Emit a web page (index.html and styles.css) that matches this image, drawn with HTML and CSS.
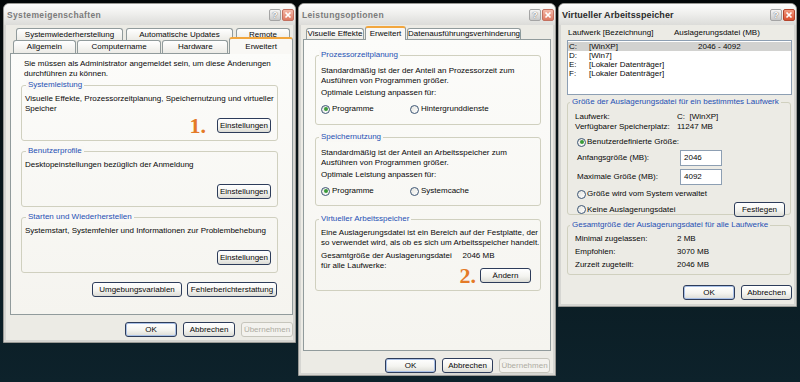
FILE: index.html
```html
<!DOCTYPE html>
<html lang="de">
<head>
	<meta charset="UTF-8" />
	<meta name="viewport" content="width=device-width, initial-scale=1.0" />
	<title>Systemeigenschaften - Virtueller Arbeitsspeicher</title>
	<link rel="stylesheet" href="styles.css">
</head>
<body>

	<!-- Systemeigenschaften -->
	<div class="window sys">
		<div class="titlebar">
			<span class="title">Systemeigenschaften</span>
			<span class="caption">
				<span class="cap-btn help">?</span>
				<span class="cap-btn close"><svg viewBox="0 0 10 10"><path d="M2.5 2.5 L7.5 7.5 M7.5 2.5 L2.5 7.5" /></svg></span>
			</span>
		</div>
		<div class="client">
			<div class="tab-row back">
				<span class="tab t-restore">Systemwiederherstellung</span>
				<span class="tab t-updates">Automatische Updates</span>
				<span class="tab t-remote">Remote</span>
			</div>
			<div class="tab-row front">
				<span class="tab t-general">Allgemein</span>
				<span class="tab t-name">Computername</span>
				<span class="tab t-hw">Hardware</span>
				<span class="tab active t-adv">Erweitert</span>
			</div>
			<div class="panel">
				<p class="intro">Sie müssen als Administrator angemeldet sein, um diese Änderungen<br>durchführen zu können.</p>

				<div class="group">
					<span class="legend">Systemleistung</span>
					<p>Visuelle Effekte, Prozessorzeitplanung, Speichernutzung und virtueller<br>Speicher</p>
					<div class="btn-row">
						<span class="step">1.</span>
						<button class="btn wide">Einstellungen</button>
					</div>
				</div>

				<div class="group">
					<span class="legend">Benutzerprofile</span>
					<p>Desktopeinstellungen bezüglich der Anmeldung</p>
					<div class="btn-row">
						<button class="btn wide">Einstellungen</button>
					</div>
				</div>

				<div class="group">
					<span class="legend">Starten und Wiederherstellen</span>
					<p>Systemstart, Systemfehler und Informationen zur Problembehebung</p>
					<div class="btn-row">
						<button class="btn wide">Einstellungen</button>
					</div>
				</div>

				<div class="actions">
					<button class="btn xwide">Umgebungsvariablen</button>
					<button class="btn xwide">Fehlerberichterstattung</button>
				</div>
			</div>
			<div class="footer">
				<button class="btn default">OK</button>
				<button class="btn">Abbrechen</button>
				<button class="btn disabled">Übernehmen</button>
			</div>
		</div>
	</div>

	<!-- Leistungsoptionen -->
	<div class="window perf">
		<div class="titlebar">
			<span class="title">Leistungsoptionen</span>
			<span class="caption">
				<span class="cap-btn help">?</span>
				<span class="cap-btn close"><svg viewBox="0 0 10 10"><path d="M2.5 2.5 L7.5 7.5 M7.5 2.5 L2.5 7.5" /></svg></span>
			</span>
		</div>
		<div class="client">
			<div class="tab-row">
				<span class="tab t-fx">Visuelle Effekte</span>
				<span class="tab active t-adv">Erweitert</span>
				<span class="tab t-dep">Datenausführungsverhinderung</span>
			</div>
			<div class="panel">
				<div class="group g-cpu">
					<span class="legend">Prozessorzeitplanung</span>
					<p>Standardmäßig ist der der Anteil an Prozessorzeit zum<br>Ausführen von Programmen größer.</p>
					<p class="hint">Optimale Leistung anpassen für:</p>
					<div class="options">
						<span class="option"><span class="radio on"></span>Programme</span>
						<span class="option"><span class="radio"></span>Hintergrunddienste</span>
					</div>
				</div>

				<div class="group g-mem">
					<span class="legend">Speichernutzung</span>
					<p>Standardmäßig ist der Anteil an Arbeitsspeicher zum<br>Ausführen von Programmen größer.</p>
					<p class="hint">Optimale Leistung anpassen für:</p>
					<div class="options">
						<span class="option"><span class="radio on"></span>Programme</span>
						<span class="option"><span class="radio"></span>Systemcache</span>
					</div>
				</div>

				<div class="group g-virt">
					<span class="legend">Virtueller Arbeitsspeicher</span>
					<p>Eine Auslagerungsdatei ist ein Bereich auf der Festplatte, der<br>so verwendet wird, als ob es sich um Arbeitsspeicher handelt.</p>
					<div class="pagefile">
						<span class="pf-label">Gesamtgröße der Auslagerungsdatei<br>für alle Laufwerke:</span>
						<div class="pf-value">
							<span>2046 MB</span>
							<div class="pf-change">
								<span class="step">2.</span>
								<button class="btn">Ändern</button>
							</div>
						</div>
					</div>
				</div>
			</div>
			<div class="footer">
				<button class="btn default">OK</button>
				<button class="btn">Abbrechen</button>
				<button class="btn disabled">Übernehmen</button>
			</div>
		</div>
	</div>

	<!-- Virtueller Arbeitsspeicher -->
	<div class="window vm">
		<div class="titlebar">
			<span class="title">Virtueller Arbeitsspeicher</span>
			<span class="caption">
				<span class="cap-btn help">?</span>
				<span class="cap-btn close"><svg viewBox="0 0 10 10"><path d="M2.5 2.5 L7.5 7.5 M7.5 2.5 L2.5 7.5" /></svg></span>
			</span>
		</div>
		<div class="client">
			<div class="lb-head">
				<span class="lb-col">Laufwerk [Bezeichnung]</span>
				<span>Auslagerungsdatei (MB)</span>
			</div>
			<div class="listbox">
				<div class="lb-row sel"><span class="drive">C:</span><span class="label">[WinXP]</span><span>2046 - 4092</span></div>
				<div class="lb-row"><span class="drive">D:</span><span class="label">[Win7]</span></div>
				<div class="lb-row"><span class="drive">E:</span><span class="label">[Lokaler Datenträger]</span></div>
				<div class="lb-row"><span class="drive">F:</span><span class="label">[Lokaler Datenträger]</span></div>
			</div>

			<div class="group g-drive">
				<span class="legend">Größe der Auslagerungsdatei für ein bestimmtes Laufwerk</span>
				<div class="field first"><span class="key">Laufwerk:</span><span>C:&nbsp; [WinXP]</span></div>
				<div class="field"><span class="key">Verfügbarer Speicherplatz:</span><span>11247 MB</span></div>
				<div class="radio-line r-custom"><span class="radio on"></span>Benutzerdefinierte Größe:</div>
				<div class="size-row"><span class="key">Anfangsgröße (MB):</span><span class="input">2046</span></div>
				<div class="size-row"><span class="key">Maximale Größe (MB):</span><span class="input">4092</span></div>
				<div class="radio-line r-system"><span class="radio"></span>Größe wird vom System verwaltet</div>
				<div class="set-row">
					<span class="radio-line"><span class="radio"></span>Keine Auslagerungsdatei</span>
					<button class="btn">Festlegen</button>
				</div>
			</div>

			<div class="group g-total">
				<span class="legend">Gesamtgröße der Auslagerungsdatei für alle Laufwerke</span>
				<div class="total first"><span class="key">Minimal zugelassen:</span><span>2 MB</span></div>
				<div class="total"><span class="key">Empfohlen:</span><span>3070 MB</span></div>
				<div class="total"><span class="key">Zurzeit zugeteilt:</span><span>2046 MB</span></div>
			</div>

			<div class="footer">
				<button class="btn default">OK</button>
				<button class="btn">Abbrechen</button>
			</div>
		</div>
	</div>

</body>
</html>
```

FILE: styles.css
```css
/* Variables */
:root {
	--face: #ecebe5;
	--page: #f9f8f5;
	--frame: #d6d6d2;
	--tab-line: #919b9c;
	--group-line: #d0d0bf;
	--legend: #1f50b4;
	--text: #080808;
	--step: #e47a27;
}
/* End of Variables */

* {
	margin: 0;
	padding: 0;
	box-sizing: border-box;
}

body {
	display: flex;
	align-items: flex-start;
	gap: 2px;
	height: 382px;
	overflow: hidden;
	padding: 3px 0 0 3px;
	background: linear-gradient(#040809, #0a1a20 60%, #0d222b);
	color: var(--text);
	font-family: "Liberation Sans", Arial, sans-serif;
	font-size: 8px;
	line-height: 10px;
	white-space: nowrap;
}

/* Window frame */
.window {
	display: flex;
	flex-direction: column;
	padding: 0 2px 2px;
	background: var(--frame);
	border: 1px solid #9a9a96;
	border-radius: 6px 6px 0 0;
}

.sys { width: 293px; height: 340px; }
.perf { width: 258px; height: 373px; }
.vm { width: 239px; height: 304px; }

.titlebar {
	display: flex;
	align-items: center;
	justify-content: space-between;
	height: 21px;
	margin: 0 -2px;
	padding: 0 1px 0 3px;
	border-radius: 5px 5px 0 0;
	background: linear-gradient(#fdfdfd, #efefed 45%, #dcdcd9);
}

.title {
	font-size: 8.5px;
	font-weight: bold;
	letter-spacing: 0.35px;
	color: #7b7b7b;
}

.vm .title {
	font-size: 9px;
	letter-spacing: 0.1px;
	color: #2b2b2b;
}

.caption {
	display: flex;
	gap: 1px;
}

.cap-btn {
	display: flex;
	align-items: center;
	justify-content: center;
	width: 12px;
	height: 12px;
	border-radius: 2px;
}

.cap-btn.help {
	border: 1px solid #a4a4a4;
	background: linear-gradient(#f6f6f6, #c9c9c9);
	color: #fff;
	font-size: 9px;
	font-weight: bold;
	letter-spacing: 0;
	text-shadow: 0 0 1px #777, 0 0 1px #777;
}

.cap-btn.close {
	border: 1px solid #c3705f;
	background: linear-gradient(#f4b8a8, #de7a63);
}

.vm .cap-btn.close {
	border-color: #b4442c;
	background: linear-gradient(#f29a80, #d9502f);
}

.cap-btn svg {
	width: 10px;
	height: 10px;
	stroke: #fff;
	stroke-width: 1.7;
	fill: none;
}

.client {
	flex: 1;
	display: flex;
	flex-direction: column;
	background: var(--face);
}

/* Tabs */
.tab-row {
	display: flex;
	align-items: flex-end;
}

.tab {
	display: flex;
	align-items: center;
	justify-content: center;
	height: 100%;
	border: 1px solid var(--tab-line);
	border-bottom: 0;
	border-radius: 3px 3px 0 0;
	background: linear-gradient(#ffffff, #ecebe6);
}

.tab.active {
	position: relative;
	z-index: 1;
	margin-bottom: -1px;
	border-top: 2px solid #f2a63d;
	background: var(--page);
}

.sys .tab-row.back {
	height: 12px;
	margin: 3px 0 0 10px;
	gap: 3px;
}

.sys .tab-row.front {
	height: 13px;
	margin-left: 7px;
	gap: 1px;
}

.sys .tab.active {
	height: 17px;
	margin-top: -4px;
}

.t-restore { width: 107px; }
.t-updates { width: 107px; }
.t-remote { width: 54px; }
.t-general { width: 63px; }
.t-name { width: 85px; }
.t-hw { width: 66px; }
.sys .t-adv { width: 64px; }

.perf .tab-row {
	height: 11px;
	margin: 3px 0 0 5px;
	gap: 1px;
}

.perf .tab.active {
	height: 14px;
	margin-top: -3px;
}

.t-fx { width: 58px; }
.perf .t-adv { width: 41px; }
.t-dep { width: 114px; }

.panel {
	border: 1px solid var(--tab-line);
	background: linear-gradient(#fcfcfa, #f5f4ef);
}

.sys .panel {
	width: 283px;
	height: 262px;
	margin-left: 4px;
	padding: 5px 14px 0 10px;
}

.perf .panel {
	width: 248px;
	height: 312px;
	margin-left: 2px;
	padding: 15px 9px 0 11px;
}

.intro {
	margin-left: 3px;
}

/* Group boxes */
.group {
	display: flex;
	flex-direction: column;
	border: 1px solid var(--group-line);
	border-radius: 3px;
}

.legend {
	align-self: flex-start;
	margin-top: -6px;
	padding: 0 2px;
	background: var(--page);
	color: var(--legend);
}

.sys .group {
	height: 56px;
	margin-top: 10px;
	padding: 0 6px 7px 3px;
}

.sys .intro + .group {
	margin-top: 6px;
}

.sys .legend {
	margin-left: 1px;
}

.sys .group p {
	margin-top: 4px;
}

.btn-row {
	display: flex;
	align-items: center;
	justify-content: flex-end;
	margin-top: auto;
}

.step {
	font-family: "Liberation Serif", "Times New Roman", serif;
	font-size: 22px;
	font-weight: bold;
	line-height: 15px;
	color: var(--step);
}

.sys .step {
	margin-right: 11px;
}

.actions {
	display: flex;
	justify-content: flex-end;
	gap: 5px;
	margin: 9px 1px 0 0;
}

/* Leistungsoptionen groups */
.perf .group {
	margin-top: 12px;
	padding: 0 9px 0 5px;
}

.perf .group:first-child {
	margin-top: 0;
}

.perf .legend {
	margin-left: -2px;
}

.g-cpu { height: 70px; }
.g-mem { height: 69px; }
.perf .g-virt { height: 72px; margin-top: 13px; }

.perf .group p {
	margin-top: 6px;
}

.perf .group p.hint {
	margin-top: 2px;
}

.perf .g-virt p {
	margin-top: 4px;
}

.options {
	display: flex;
	align-items: center;
	height: 10px;
	margin-top: 6px;
}

.option {
	display: flex;
	align-items: center;
	gap: 2px;
}

.option:first-child {
	width: 89px;
}

.radio {
	display: grid;
	place-items: center;
	width: 9px;
	height: 9px;
	border: 1px solid #3d5675;
	border-radius: 50%;
	background: linear-gradient(135deg, #e4e4de, #ffffff);
}

.radio.on::after {
	content: '';
	width: 4px;
	height: 4px;
	border-radius: 50%;
	background: #3a9a3a;
}

.pagefile {
	display: flex;
	margin-top: 3px;
}

.pf-label {
	width: 143px;
}

.pf-value {
	display: flex;
	flex-direction: column;
}

.pf-change {
	display: flex;
	align-items: center;
	margin: 7px 0 0 -3px;
}

.pf-change .step {
	margin-right: 4px;
}

/* Virtueller Arbeitsspeicher */
.vm .client {
	padding: 3px 2px 0 6px;
}

.lb-head {
	display: flex;
	padding-left: 1px;
}

.lb-col {
	width: 106px;
}

.listbox {
	width: 225px;
	height: 55px;
	margin-top: 2px;
	padding: 1px 0;
	border: 1px solid #8d9fb3;
	background: #fff;
}

.lb-row {
	display: flex;
	height: 9px;
	line-height: 9px;
}

.lb-row.sel {
	background: #d2d2d0;
}

.lb-row .drive {
	width: 21px;
	padding-left: 1px;
}

.lb-row .label {
	width: 109px;
}

.vm .group {
	width: 224px;
	padding: 0 5px 0 7px;
}

.vm .legend {
	margin-left: -5px;
	background: var(--face);
}

.g-drive {
	height: 113px;
	margin-top: 7px;
}

.g-total {
	height: 50px;
	margin-top: 10px;
}

.field {
	display: flex;
	height: 10px;
}

.field.first {
	margin-top: 5px;
}

.key {
	width: 102px;
}

.radio-line {
	display: flex;
	align-items: center;
	gap: 1px;
	height: 10px;
	padding-left: 2px;
}

.r-custom {
	margin-top: 5px;
}

.r-system {
	margin-top: 4px;
}

.size-row {
	display: flex;
	align-items: center;
	height: 16px;
	margin-top: 3px;
}

.size-row .key {
	width: 105px;
	padding-left: 2px;
}

.input {
	display: flex;
	align-items: center;
	width: 42px;
	height: 16px;
	padding-left: 3px;
	border: 1px solid #8d9fb3;
	background: #fff;
}

.set-row {
	display: flex;
	align-items: center;
	justify-content: space-between;
	height: 15px;
	margin-top: 3px;
}

.total {
	display: flex;
	align-items: center;
	height: 13px;
}

.total.first {
	margin-top: 2px;
}

/* Buttons */
.btn {
	display: flex;
	align-items: center;
	justify-content: center;
	width: 51px;
	height: 15px;
	padding: 0;
	border: 1px solid #2d3c5a;
	border-radius: 3px;
	background: linear-gradient(#ffffff, #f4f4f0 55%, #dcdcd6);
	color: var(--text);
	font: inherit;
	line-height: 10px;
}

.btn.wide {
	width: 54px;
}

.btn.xwide {
	width: 90px;
}

.btn.default {
	box-shadow: inset 0 0 0 1px #a9c0e6;
}

.btn.disabled {
	border-color: #c6c5bc;
	color: #aeaca2;
	background: #f3f2ee;
}

.footer {
	display: flex;
	justify-content: flex-end;
	gap: 6px;
}

.sys .footer {
	margin-top: 7px;
}

.sys .footer .btn {
	width: 52px;
}

.perf .footer {
	margin-top: 7px;
	padding-right: 3px;
}

.vm .footer {
	margin-top: 10px;
}

.vm .footer .default {
	width: 52px;
}
```
